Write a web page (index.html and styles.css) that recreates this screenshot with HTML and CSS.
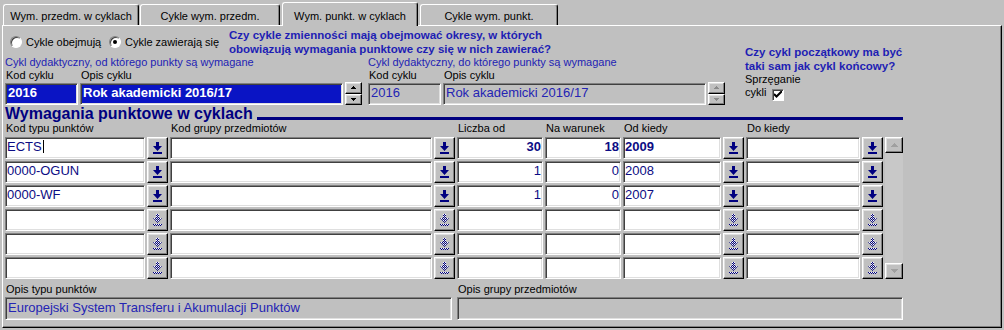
FILE: index.html
```html
<!DOCTYPE html>
<html lang="pl">
<head>
    <meta charset="UTF-8">
    <meta name="viewport" content="width=device-width, initial-scale=1.0">
    <title>Wymagania punktowe w cyklach</title>
    <link rel="stylesheet" href="styles.css">
</head>
<body>
    <svg class="defs" aria-hidden="true">
        <defs>
            <pattern id="dots" width="2" height="2" patternUnits="userSpaceOnUse">
                <rect x="0" y="0" width="1" height="1" fill="#000080"/>
                <rect x="1" y="1" width="1" height="1" fill="#000080"/>
                <rect x="1" y="0" width="1" height="1" fill="#ffffff"/>
            </pattern>
            <symbol id="arrow-down" viewBox="0 0 9 12">
                <path d="M3 0h3v4h3l-4.5 5L0 4h3z M0 10h9v2H0z"/>
            </symbol>
            <symbol id="tri-up" viewBox="0 0 5 3">
                <path d="M2 0h1v1h1v1h1v1H0V2h1V1h1z"/>
            </symbol>
            <symbol id="tri-down" viewBox="0 0 5 3">
                <path d="M0 0h5v1H4v1H3v1H2V2H1V1H0z"/>
            </symbol>
            <symbol id="tri-up-l" viewBox="0 0 7 4">
                <path d="M3 0h1v1h1v1h1v1h1v1H0V3h1V2h1V1h1z"/>
            </symbol>
            <symbol id="tri-down-l" viewBox="0 0 7 4">
                <path d="M0 0h7v1H6v1H5v1H4v1H3V3H2V2H1V1H0z"/>
            </symbol>
        </defs>
    </svg>

    <div class="tabs">
        <div class="tab tab-1">Wym. przedm. w cyklach</div>
        <div class="tab tab-2">Cykle wym. przedm.</div>
        <div class="tab tab-3 active">Wym. punkt. w cyklach</div>
        <div class="tab tab-4">Cykle wym. punkt.</div>
    </div>

    <div class="panel">
        <div class="top">
            <div class="main">
                <div class="opts">
                    <label class="radio radio-1"><span class="dot"></span>Cykle obejmują</label>
                    <label class="radio radio-2"><span class="dot checked"></span>Cykle zawierają się</label>
                    <p class="question">Czy cykle zmienności mają obejmować okresy, w których<br>obowiązują wymagania punktowe czy się w nich zawierać?</p>
                </div>
                <div class="cycles">
                    <div class="cycle">
                        <div class="caption">Cykl dydaktyczny, od którego punkty są wymagane</div>
                        <div class="fields">
                            <div class="code"><span class="lbl">Kod cyklu</span><div class="box sel">2016</div></div>
                            <div class="descr"><span class="lbl">Opis cyklu</span><div class="box sel">Rok akademicki 2016/17</div></div>
                            <div class="spin">
                                <div class="spin-btn"><svg width="5" height="3"><use href="#tri-up"/></svg></div>
                                <div class="spin-btn"><svg width="5" height="3"><use href="#tri-down"/></svg></div>
                            </div>
                        </div>
                    </div>
                    <div class="cycle">
                        <div class="caption">Cykl dydaktyczny, do którego punkty są wymagane</div>
                        <div class="fields">
                            <div class="code"><span class="lbl">Kod cyklu</span><div class="box off">2016</div></div>
                            <div class="descr"><span class="lbl">Opis cyklu</span><div class="box off">Rok akademicki 2016/17</div></div>
                            <div class="spin spin-off">
                                <div class="spin-btn"><svg width="5" height="3"><use href="#tri-up"/></svg></div>
                                <div class="spin-btn"><svg width="5" height="3"><use href="#tri-down"/></svg></div>
                            </div>
                        </div>
                    </div>
                </div>
            </div>
            <div class="side">
                <p class="side-q">Czy cykl początkowy ma być<br>taki sam jak cykl końcowy?</p>
                <div class="side-line">Sprzęganie</div>
                <div class="side-line">cykli<span class="check"><svg width="8" height="7" viewBox="0 0 8 7"><path d="M0 3l2.5 2.5L8 0" fill="none" stroke="#000" stroke-width="2"/></svg></span></div>
            </div>
        </div>

        <div class="section">
            <h2>Wymagania punktowe w cyklach</h2>
            <div class="rule"></div>
        </div>

        <div class="grid">
            <div class="scroll">
                <div class="scroll-btn"><svg width="7" height="4"><use href="#tri-up-l"/></svg></div>
                <div class="scroll-btn"><svg width="7" height="4"><use href="#tri-down-l"/></svg></div>
            </div>

            <div class="hd span2">Kod typu punktów</div>
            <div class="hd span2">Kod grupy przedmiotów</div>
            <div class="hd">Liczba od</div>
            <div class="hd">Na warunek</div>
            <div class="hd span2">Od kiedy</div>
            <div class="hd span2">Do kiedy</div>
            <div></div>

            <div class="box">ECTS<span class="caret"></span></div>
            <div class="btn"><svg class="ico"><use href="#arrow-down"/></svg></div>
            <div class="box"></div>
            <div class="btn"><svg class="ico"><use href="#arrow-down"/></svg></div>
            <div class="box num bold">30</div>
            <div class="box num bold">18</div>
            <div class="box bold">2009</div>
            <div class="btn"><svg class="ico"><use href="#arrow-down"/></svg></div>
            <div class="box"></div>
            <div class="btn"><svg class="ico"><use href="#arrow-down"/></svg></div>

            <div class="box">0000-OGUN</div>
            <div class="btn"><svg class="ico"><use href="#arrow-down"/></svg></div>
            <div class="box"></div>
            <div class="btn"><svg class="ico"><use href="#arrow-down"/></svg></div>
            <div class="box num">1</div>
            <div class="box num">0</div>
            <div class="box">2008</div>
            <div class="btn"><svg class="ico"><use href="#arrow-down"/></svg></div>
            <div class="box"></div>
            <div class="btn"><svg class="ico"><use href="#arrow-down"/></svg></div>

            <div class="box">0000-WF</div>
            <div class="btn"><svg class="ico"><use href="#arrow-down"/></svg></div>
            <div class="box"></div>
            <div class="btn"><svg class="ico"><use href="#arrow-down"/></svg></div>
            <div class="box num">1</div>
            <div class="box num">0</div>
            <div class="box">2007</div>
            <div class="btn"><svg class="ico"><use href="#arrow-down"/></svg></div>
            <div class="box"></div>
            <div class="btn"><svg class="ico"><use href="#arrow-down"/></svg></div>

            <div class="box"></div>
            <div class="btn off"><svg class="ico"><use href="#arrow-down"/></svg></div>
            <div class="box"></div>
            <div class="btn off"><svg class="ico"><use href="#arrow-down"/></svg></div>
            <div class="box"></div>
            <div class="box"></div>
            <div class="box"></div>
            <div class="btn off"><svg class="ico"><use href="#arrow-down"/></svg></div>
            <div class="box"></div>
            <div class="btn off"><svg class="ico"><use href="#arrow-down"/></svg></div>

            <div class="box"></div>
            <div class="btn off"><svg class="ico"><use href="#arrow-down"/></svg></div>
            <div class="box"></div>
            <div class="btn off"><svg class="ico"><use href="#arrow-down"/></svg></div>
            <div class="box"></div>
            <div class="box"></div>
            <div class="box"></div>
            <div class="btn off"><svg class="ico"><use href="#arrow-down"/></svg></div>
            <div class="box"></div>
            <div class="btn off"><svg class="ico"><use href="#arrow-down"/></svg></div>

            <div class="box"></div>
            <div class="btn off"><svg class="ico"><use href="#arrow-down"/></svg></div>
            <div class="box"></div>
            <div class="btn off"><svg class="ico"><use href="#arrow-down"/></svg></div>
            <div class="box"></div>
            <div class="box"></div>
            <div class="box"></div>
            <div class="btn off"><svg class="ico"><use href="#arrow-down"/></svg></div>
            <div class="box"></div>
            <div class="btn off"><svg class="ico"><use href="#arrow-down"/></svg></div>
        </div>

        <div class="bottom">
            <div class="bottom-type"><span class="lbl">Opis typu punktów</span><div class="box off tall">Europejski System Transferu i Akumulacji Punktów</div></div>
            <div class="bottom-group"><span class="lbl">Opis grupy przedmiotów</span><div class="box off tall"></div></div>
        </div>
    </div>
</body>
</html>
```

FILE: styles.css
```css
* {
    box-sizing: border-box;
}

body {
    margin: 0;
    background-color: #c0c0c0;
    font-family: "Liberation Sans", Arial, sans-serif;
    font-size: 11px;
    color: #000;
    overflow: hidden;
}

.defs {
    position: absolute;
    width: 0;
    height: 0;
}

/* tabs */
.tabs {
    display: flex;
    align-items: flex-end;
    height: 25px;
    padding-left: 3px;
}

.tab {
    height: 21px;
    padding-top: 5px;
    line-height: 13px;
    text-align: center;
    white-space: nowrap;
    border-top: 1px solid #fff;
    border-left: 1px solid #fff;
    border-right: 1px solid #000;
    border-radius: 3px 3px 0 0;
    box-shadow: inset -1px 0 #808080;
    margin-right: 2px;
}

.tab-1 { width: 136px; margin-right: 1px; }
.tab-2 { width: 140px; }
.tab-3 { width: 136px; }
.tab-4 { width: 138px; }

.tab.active {
    height: 24px;
    padding-top: 7px;
    margin-bottom: -1px;
    background-color: #c0c0c0;
    position: relative;
    z-index: 1;
}

/* panel */
.panel {
    margin-left: 2px;
    width: 1000px;
    height: 303px;
    padding-left: 2px;
    border: 1px solid;
    border-color: #fff #000 #000 #fff;
    box-shadow: inset -1px -1px #808080;
}

.top {
    display: flex;
}

.main {
    width: 740px;
}

.opts {
    display: flex;
    align-items: center;
    height: 30px;
    padding: 1px 0 0 5px;
}

.radio {
    display: flex;
    align-items: center;
    gap: 4px;
    white-space: nowrap;
}

.radio-1 { width: 99px; }
.radio-2 { width: 120px; }

.dot {
    display: flex;
    align-items: center;
    justify-content: center;
    width: 12px;
    height: 12px;
    border-radius: 50%;
    background-color: #fff;
    border: 1px solid;
    border-color: #808080 #fff #fff #808080;
    box-shadow: inset 1px 1px #404040;
}

.dot.checked::after {
    content: "";
    width: 4px;
    height: 4px;
    border-radius: 50%;
    background-color: #000;
}

.question,
.side-q {
    margin: 0;
    color: #1e1eb4;
    font-weight: bold;
    font-size: 11.5px;
    line-height: 14px;
    white-space: nowrap;
}

.cycles {
    display: flex;
    gap: 6px;
}

.caption {
    color: #1e1eb4;
    line-height: 13px;
    white-space: nowrap;
}

.fields {
    display: flex;
    align-items: flex-end;
    gap: 2px;
}

.lbl {
    display: block;
    line-height: 13px;
    padding-left: 1px;
    margin-bottom: 1px;
    white-space: nowrap;
}

.code { width: 73px; }
.descr { width: 263px; }

.spin {
    display: flex;
    flex-direction: column;
    width: 17px;
    height: 23px;
}

.spin-btn,
.btn,
.scroll-btn {
    display: flex;
    align-items: center;
    justify-content: center;
    background-color: #c0c0c0;
    border: 1px solid;
    border-color: #fff #000 #000 #fff;
    box-shadow: inset -1px -1px #808080, inset 1px 1px #dfdfdf;
}

.spin-btn {
    flex: 1;
    fill: #000;
}

.spin-off .spin-btn {
    fill: #8a8a8a;
}

.side {
    padding-top: 19px;
}

.side-line {
    line-height: 13px;
}

.check {
    display: inline-flex;
    align-items: center;
    justify-content: center;
    width: 12px;
    height: 12px;
    margin-left: 6px;
    vertical-align: -2px;
    background-color: #fff;
    border: 1px solid;
    border-color: #808080 #fff #fff #808080;
    box-shadow: inset 1px 1px #404040;
}

/* heading */
.section {
    display: flex;
    align-items: flex-end;
    width: 898px;
    height: 17px;
}

.section h2 {
    margin: 0;
    font-size: 16px;
    line-height: 17px;
    color: #000080;
    white-space: nowrap;
}

.rule {
    flex: 1;
    height: 3px;
    margin: 0 0 2px 4px;
    background-color: #000080;
}

/* grid */
.grid {
    display: grid;
    width: 898px;
    grid-template-columns: 140px 21px 262px 21px 86px 76px 98px 21px 114px 21px 18px;
    grid-template-rows: 13px repeat(6, 22px);
    gap: 2px;
}

.hd {
    line-height: 13px;
    padding-left: 1px;
    white-space: nowrap;
}

.span2 {
    grid-column: span 2;
}

.box {
    height: 22px;
    padding: 0 1px;
    font-size: 13px;
    line-height: 18px;
    color: #0c0c84;
    white-space: nowrap;
    overflow: hidden;
    background-color: #fff;
    border: 1px solid;
    border-color: #808080 #fff #fff #808080;
    box-shadow: inset 1px 1px #404040, inset -1px -1px #dfdfdf;
}

.box.sel {
    background-color: #0a14c4;
    color: #fff;
    font-weight: bold;
    padding-left: 2px;
}

.box.off {
    background-color: #c0c0c0;
    color: #2424b4;
    padding-left: 2px;
}

.box.tall {
    height: 23px;
    line-height: 19px;
}

.num {
    text-align: right;
}

.bold {
    font-weight: bold;
}

.caret {
    display: inline-block;
    width: 1px;
    height: 13px;
    margin-left: 1px;
    vertical-align: -2px;
    background-color: #000;
}

.btn {
    fill: #000080;
}

.btn.off {
    fill: url(#dots);
}

.ico {
    width: 9px;
    height: 12px;
}

.scroll {
    grid-column: 11;
    grid-row: 2 / span 6;
    display: flex;
    flex-direction: column;
    justify-content: space-between;
    background-color: #c8c8c8;
}

.scroll-btn {
    height: 16px;
    fill: #a0a0a0;
}

/* bottom descriptions */
.bottom {
    display: flex;
    gap: 5px;
    margin-top: 4px;
}

.bottom-type { width: 447px; }
.bottom-group { width: 446px; }
```
